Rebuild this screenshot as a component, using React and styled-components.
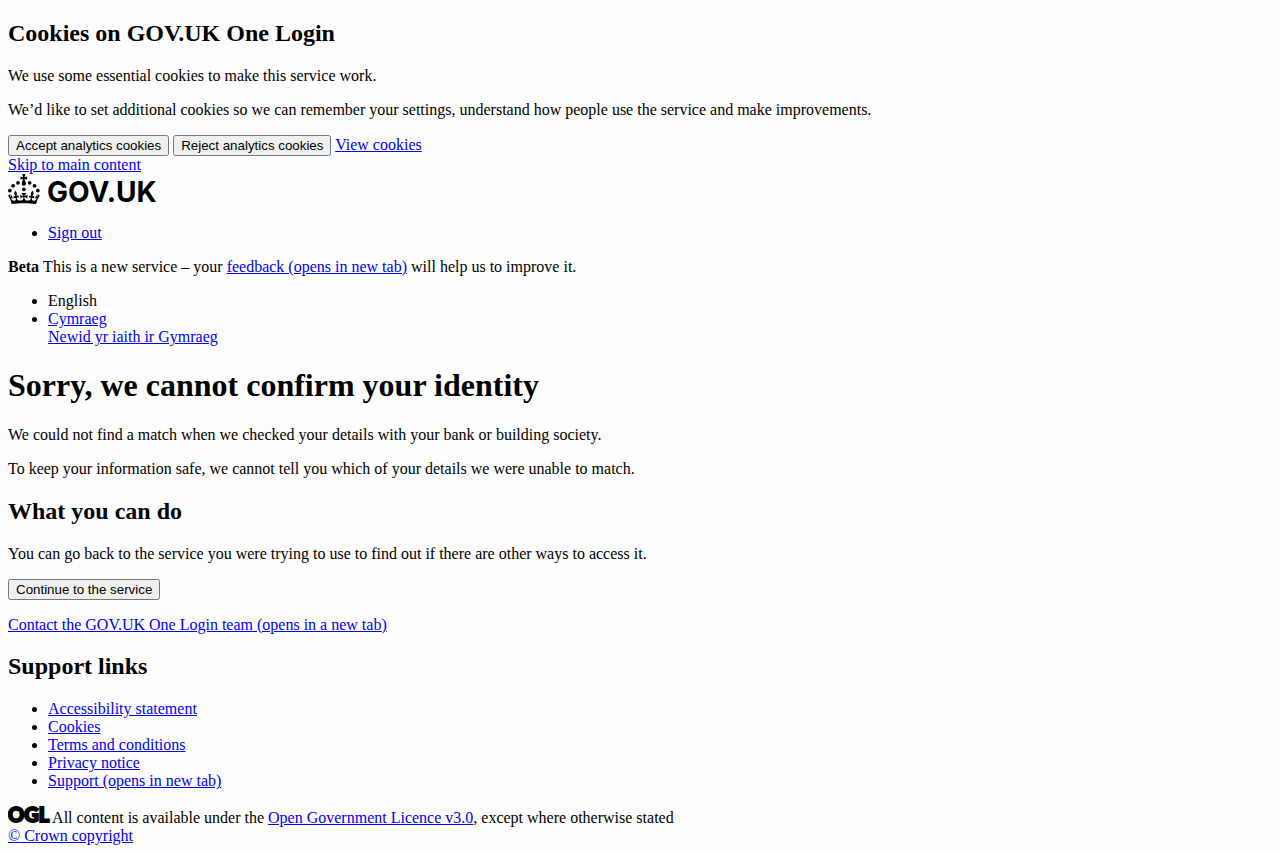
import React from "react";
import styled, { createGlobalStyle } from "styled-components";

const GlobalStyle = createGlobalStyle`
  html {
    background: #fdfdfd;
  }
  body {
    margin: 0 8px 8px;
    color: #000;
    font-family: "Liberation Serif", "Times New Roman", serif;
    font-size: 16px;
    line-height: normal;
  }
`;

const Page = styled.div`
  display: block;
`;

const Title = styled.h1`
  font-size: 32px;
  font-weight: 700;
`;

const Heading = styled.h2`
  font-size: 24px;
  font-weight: 700;
`;

const Text = styled.p`
  margin: 16px 0;
`;

const Phase = styled.strong`
  font-weight: 700;
`;

const PhaseMessage = styled.span`
  display: inline-block;
`;

const List = styled.ul`
  margin: 16px 0;
  padding-left: 40px;
  list-style: disc;
`;

const Link = styled.a`
  color: #0000ee;
  text-decoration: underline;
`;

const Button = styled.button`
  margin: 0;
  font-family: "Liberation Sans", Arial, sans-serif;
`;

const LogoText = styled.text`
  font-family: Inter, "Liberation Sans", sans-serif;
  font-size: 28px;
  font-weight: 700;
`;

const LicenceText = styled.text`
  font-family: Lato, "Liberation Sans", sans-serif;
  font-size: 20px;
  font-weight: 900;
  stroke: #000;
  stroke-width: 2px;
`;

function GovLogo() {
  return (
    <svg width="148" height="30" viewBox="0 0 148 30" role="img" aria-label="GOV.UK" overflow="visible">
      <g transform="scale(0.5)">
        <circle cx="20" cy="17.6" r="3.7" />
        <circle cx="10.2" cy="23.5" r="3.7" />
        <circle cx="3.7" cy="33.2" r="3.7" />
        <circle cx="31.7" cy="30.6" r="3.7" />
        <circle cx="43.3" cy="17.6" r="3.7" />
        <circle cx="53.2" cy="23.5" r="3.7" />
        <circle cx="59.7" cy="33.2" r="3.7" />
        <path d="M33.1,9.8c.2-.1.3-.3.5-.5l4.6,2.4v-6.8l-4.6,1.5c-.1-.2-.3-.3-.5-.5l1.9-5.9h-6.7l1.9,5.9c-.2.1-.3.3-.5.5l-4.6-1.5v6.8l4.6-2.4c.1.2.3.3.5.5l-2.6,8c-.9,2.8,1.2,5.7,4.1,5.7h0c3,0,5.1-2.9,4.1-5.7l-2.6-8ZM37,37.9s-3.4,3.8-4.1,6.1c2.2,0,4.2-.5,6.4-2.8l-.7,8.5c-2-2.8-4.4-4.1-5.7-3.8.1,3.1.5,6.7,5.8,7.2,3.7.3,6.7-1.5,7-3.8.4-2.6-2-4.3-3.7-1.6-1.4-4.5,2.4-6.1,4.9-3.2-1.9-4.5-1.8-7.7,2.4-10.9,3,4,2.6,7.3-1.2,11.1,2.4-1.3,6.2,0,4,4.6-1.2-2.8-3.7-2.2-4.2.2-.3,1.7.7,3.7,3,4.2,1.9.3,4.7-.9,7-5.9-1.3,0-2.4.7-3.9,1.7l2.4-8c.6,2.3,1.4,3.7,2.2,4.5.6-1.6.5-2.8,0-5.3l5,1.8c-2.6,3.6-5.2,8.7-7.3,17.5-7.4-1.1-15.7-1.7-24.5-1.7h0c-8.8,0-17.1.6-24.5,1.7-2.1-8.9-4.7-13.9-7.3-17.5l5-1.8c-.5,2.5-.6,3.7,0,5.3.8-.8,1.6-2.3,2.2-4.5l2.4,8c-1.5-1-2.6-1.7-3.9-1.7,2.3,5,5.2,6.2,7,5.9,2.3-.4,3.3-2.4,3-4.2-.5-2.4-3-3.1-4.2-.2-2.2-4.6,1.6-6,4-4.6-3.7-3.7-4.2-7.1-1.2-11.1,4.2,3.2,4.3,6.4,2.4,10.9,2.5-2.8,6.3-1.3,4.9,3.2-1.8-2.7-4.1-1-3.7,1.6.3,2.3,3.3,4.1,7,3.8,5.4-.5,5.7-4.2,5.8-7.2-1.3-.2-3.7,1-5.7,3.8l-.7-8.5c2.2,2.3,4.2,2.7,6.4,2.8-.7-2.3-4.1-6.1-4.1-6.1h10.6,0Z" />
      </g>
      <LogoText x="39" y="28">GOV.UK</LogoText>
    </svg>
  );
}

function LicenceLogo() {
  return (
    <svg width="41" height="17" viewBox="0 0 41 17" aria-hidden="true" overflow="visible">
      <LicenceText x="0" y="16">OGL</LicenceText>
    </svg>
  );
}

const supportLinks = [
  "Accessibility statement",
  "Cookies",
  "Terms and conditions",
  "Privacy notice",
  "Support (opens in new tab)",
];

export default function App() {
  return (
    <Page>
      <GlobalStyle />
      <section aria-label="Cookies on GOV.UK One Login">
        <Heading>Cookies on GOV.UK One Login</Heading>
        <Text>We use some essential cookies to make this service work.</Text>
        <Text>
          We’d like to set additional cookies so we can remember your settings, understand how people use the service
          and make improvements.
        </Text>
        <div>
          <Button type="button">Accept analytics cookies</Button>{" "}
          <Button type="button">Reject analytics cookies</Button> <Link href="#cookies">View cookies</Link>
        </div>
      </section>
      <Link href="#main-content">Skip to main content</Link>
      <header>
        <Link href="#home" aria-label="GOV.UK">
          <GovLogo />
        </Link>
        <nav aria-label="Account">
          <List>
            <li>
              <Link href="#sign-out">Sign out</Link>
            </li>
          </List>
        </nav>
      </header>
      <Text>
        <Phase>Beta</Phase>{" "}
        <PhaseMessage>
          This is a new service – your <Link href="#feedback">feedback (opens in new tab)</Link> will help us to
          improve it.
        </PhaseMessage>
      </Text>
      <nav aria-label="Language">
        <List>
          <li>English</li>
          <li>
            <Link href="#cy" lang="cy">
              Cymraeg
              <br />
              Newid yr iaith ir Gymraeg
            </Link>
          </li>
        </List>
      </nav>
      <main id="main-content">
        <Title>Sorry, we cannot confirm your identity</Title>
        <Text>We could not find a match when we checked your details with your bank or building society.</Text>
        <Text>To keep your information safe, we cannot tell you which of your details we were unable to match.</Text>
        <Heading>What you can do</Heading>
        <Text>
          You can go back to the service you were trying to use to find out if there are other ways to access it.
        </Text>
        <Button type="button">Continue to the service</Button>
        <Text>
          <Link href="#contact">Contact the GOV.UK One Login team (opens in a new tab)</Link>
        </Text>
      </main>
      <footer>
        <Heading>Support links</Heading>
        <List>
          {supportLinks.map((label) => (
            <li key={label}>
              <Link href="#support">{label}</Link>
            </li>
          ))}
        </List>
        <LicenceLogo /> All content is available under the <Link href="#licence">Open Government Licence v3.0</Link>,
        except where otherwise stated
        <div>
          <Link href="#copyright">© Crown copyright</Link>
        </div>
      </footer>
    </Page>
  );
}
